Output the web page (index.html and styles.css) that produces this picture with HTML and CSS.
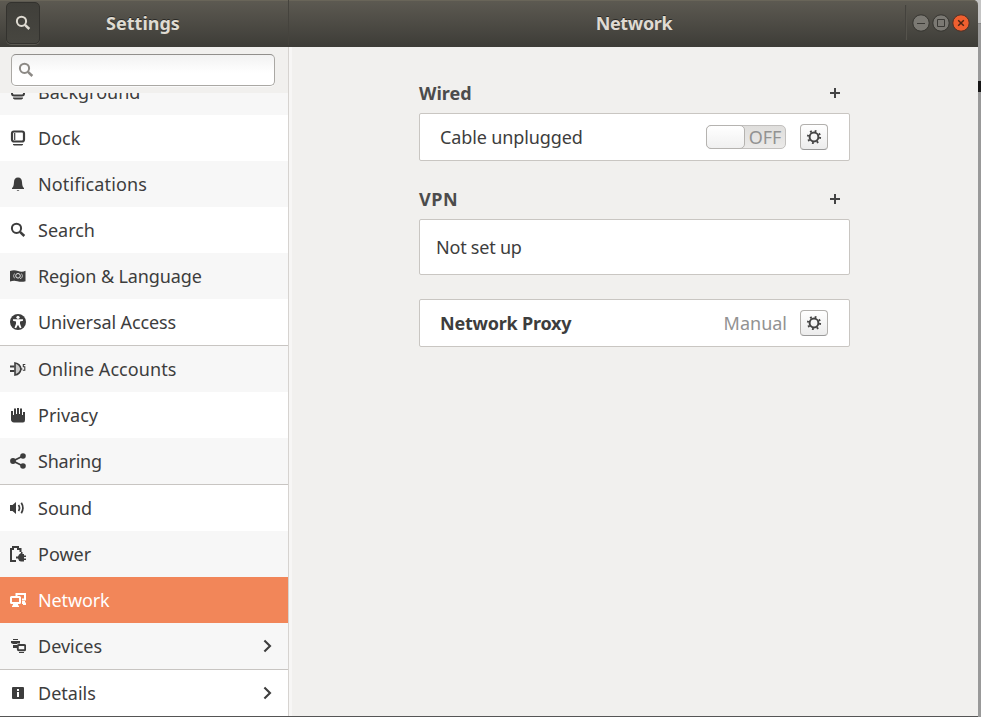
FILE: index.html
```html
<!DOCTYPE html>
<html lang="en">
<head>
<meta charset="utf-8">
<title>Settings</title>
<link rel="stylesheet" href="styles.css">
</head>
<body>
<svg class="defs" width="0" height="0">
  <symbol id="search" viewBox="0 0 16 16"><circle cx="6.500" cy="6.300" r="4.600" fill="none" stroke="currentColor" stroke-width="2"/><path d="M10 9.800 14.300 14" stroke="currentColor" stroke-width="2.500"/></symbol>
  <symbol id="gear" viewBox="0 0 16 16"><g fill="none" stroke="currentColor"><circle cx="8" cy="8" r="4.400" stroke-width="2"/><circle cx="8" cy="8" r="6.100" stroke-width="2" stroke-dasharray="1.800 2.990"/></g></symbol>
  <symbol id="chevron" viewBox="0 0 16 16"><path d="M5.400 2.500 11 8l-5.600 5.500" fill="none" stroke="currentColor" stroke-width="2.100"/></symbol>
</svg>
<div class="desktop">
  <div class="window">
    <header class="titlebar">
      <div class="title-left">
        <button class="search-toggle"><svg width="16" height="16"><use href="#search"/></svg></button>
        <h1 class="title"><span>Settings</span></h1>
      </div>
      <div class="title-right">
        <h1 class="title"><span class="t-network">Network</span></h1>
        <div class="controls">
          <svg class="control" viewBox="0 0 18 18"><circle class="disc" cx="9" cy="9" r="8.200"/><path class="mark" d="M5 9.500h8"/></svg>
          <svg class="control" viewBox="0 0 18 18"><circle class="disc" cx="9" cy="9" r="8.200"/><path class="mark" d="M5.500 5.500h7v7h-7z"/></svg>
          <svg class="control close" viewBox="0 0 18 18"><circle class="disc" cx="9" cy="9" r="8.200"/><path class="mark" d="m6.200 6.200 5.600 5.600m0-5.600-5.600 5.600"/></svg>
        </div>
      </div>
    </header>
    <div class="body">
      <aside class="sidebar">
        <div class="search-bar"><div class="search-field"><svg width="16" height="16"><use href="#search"/></svg></div></div>
        <nav class="list">
          <a class="row alt clipped"><svg viewBox="0 0 16 16"><rect x="2" y="1" width="12" height="10.500" rx="2" fill="none" stroke="currentColor" stroke-width="2"/><path d="M3 13.500h10v1l-1.500 1h-7L3 14.500z" fill="currentColor"/></svg><span>Background</span></a>
          <a class="row"><svg viewBox="0 0 16 16"><rect x="2" y="1.500" width="12" height="10" rx="2" fill="none" stroke="currentColor" stroke-width="2.200"/><path d="M4.700 3v7" stroke="currentColor" stroke-width="1.200"/><path d="M3 14h10v.8l-1 .8H4l-1-.8z" fill="currentColor"/></svg><span>Dock</span></a>
          <a class="row alt"><svg viewBox="0 0 16 16"><path d="M8 1.500C5.300 1.500 4.200 3.200 4 6c-.2 3.500-.7 5-2 6v1h12v-1c-1.300-1-1.800-2.500-2-6-.2-2.800-1.300-4.500-4-4.500zM6.500 14h3L8 15z" fill="currentColor"/></svg><span class="wide">Notifications</span></a>
          <a class="row"><svg viewBox="0 0 16 16"><use href="#search"/></svg><span>Search</span></a>
          <a class="row alt"><svg viewBox="0 0 16 16"><path d="M0 3q4-1.400 8 0t7.500-.2v10.400q-4 1.200-8 0T0 13.600z" fill="currentColor"/><circle cx="8" cy="7.800" r="2.300" fill="none" stroke="#e8e8e8"/><path d="M4.500 5.500q-2 2.300 0 4.800M11.500 5.500q2 2.300 0 4.800M9.500 9.500l1.500 1.500" fill="none" stroke="#bbb"/></svg><span class="tight">Region &amp; Language</span></a>
          <a class="row last"><svg viewBox="0 0 16 16"><circle cx="8" cy="8" r="8" fill="currentColor"/><circle cx="8" cy="3.300" r="1.600" fill="#fff"/><path d="M3 5.200h10v1.500l-3 .8v2.300l1.500 4-1.600.5L8 10.700l-1.900 3.600-1.600-.5L6 9.800V7.500l-3-.8z" fill="#fff"/></svg><span class="tight">Universal Access</span></a>
          <a class="row alt"><svg viewBox="0 0 16 16"><path d="M0 5.500h4.500M0 10h4.500" stroke="currentColor" stroke-width="2"/><path d="M5 2v12q5-.8 6-6-1-5.200-6-6z" fill="#c9c9c9" stroke="currentColor" stroke-width="1.600"/><path d="M11 8h1.500M15.300 3.500h-2v2.300h1.500v3.500h-2" fill="none" stroke="currentColor" stroke-width="1.100"/></svg><span class="slight">Online Accounts</span></a>
          <a class="row"><svg viewBox="0 0 16 16"><path d="M1 4h2v4h1V1.500h2V7h1V1h2v6h1V1.500h2V8h1V5h2v8q0 2.500-2 2.500H4Q1 15 1 12.500z" fill="currentColor"/></svg><span>Privacy</span></a>
          <a class="row alt last"><svg viewBox="0 0 16 16"><path d="M13 3 3 8l10 5" fill="none" stroke="currentColor" stroke-width="1.800"/><g fill="currentColor"><circle cx="13" cy="3" r="2.800"/><circle cx="3" cy="8" r="2.900"/><circle cx="13" cy="13" r="2.800"/></g></svg><span class="tighter">Sharing</span></a>
          <a class="row"><svg viewBox="0 0 16 16"><path d="M0 5h2.500L6 2v12l-3.500-3H0z" fill="currentColor"/><path d="M8.500 5q2 3 0 6M11.300 2.800q3.200 5.200 0 10.400" fill="none" stroke="currentColor" stroke-width="1.700"/></svg><span>Sound</span></a>
          <a class="row alt"><svg viewBox="0 0 16 16"><path d="M6 15H1V3h2V1h5v2h2.500v3" fill="none" stroke="currentColor" stroke-width="2"/><path d="M12.500 6v2H14v1.500h2V11h-2v1.500h2V14h-2v1.500h-3Q8.500 15 8 12.500H6v-2h2Q8.500 8 11 7V6z" fill="currentColor"/></svg><span>Power</span></a>
          <a class="row selected"><svg viewBox="0 0 16 16"><path d="M6.500 4V2H15v5.500h-3" fill="none" stroke="currentColor" stroke-width="2"/><rect x="1" y="5" width="9" height="6" rx=".5" fill="none" stroke="currentColor" stroke-width="2"/><path d="M3 12h5v1.500h1V15H2v-1.500h1zM12 9h3v1.500h1V13h-3v-1h-1z" fill="currentColor"/></svg><span class="tight">Network</span></a>
          <a class="row alt last"><svg viewBox="0 0 16 16"><path d="M3 1h5v1H3zM1 3h9v2.500H7V6H3L1 5zM3 7h4v3H3z" fill="currentColor"/><rect x="7.800" y="7" width="7.400" height="5.200" rx="1" fill="none" stroke="currentColor" stroke-width="1.900"/><path d="M9 14h5v1H9z" fill="currentColor"/></svg><span>Devices</span><svg class="chev"><use href="#chevron"/></svg></a>
          <a class="row"><svg viewBox="0 0 16 16"><rect x="2" y="2" width="12" height="12" rx="1" fill="currentColor"/><path d="M7 4h2v2H7zM7 7h2v5H7z" fill="#fff"/></svg><span>Details</span><svg class="chev"><use href="#chevron"/></svg></a>
        </nav>
      </aside>
      <main class="content">
        <div class="heading"><h2>Wired</h2><svg class="plus" viewBox="0 0 10 10"><path d="M0 5h10M5 0v10"/></svg></div>
        <section class="card"><span class="tight">Cable unplugged</span><div class="switch"><i class="knob"></i><span class="off">OFF</span></div><button class="gear"><svg width="16" height="16"><use href="#gear"/></svg></button></section>
        <div class="heading second"><h2 class="vpn-title">VPN</h2><svg class="plus" viewBox="0 0 10 10"><path d="M0 5h10M5 0v10"/></svg></div>
        <section class="card vpn"><span class="tighter">Not set up</span></section>
        <section class="card proxy"><b class="tighter">Network Proxy</b><span class="manual">Manual</span><button class="gear"><svg width="16" height="16"><use href="#gear"/></svg></button></section>
      </main>
    </div>
  </div>
</div>
</body>
</html>
```
FILE: styles.css
```css
* { box-sizing: border-box; }
body { margin: 0; font: 18px/24px "Noto Sans", sans-serif; color: #3d3d3d; overflow: hidden; }
h1, h2 { margin: 0; font-size: inherit; }
button { padding: 0; }
.wide { letter-spacing: .15px; }
.slight { letter-spacing: .06px; }
.vpn-title { letter-spacing: .5px; }
.tight { letter-spacing: -.12px; }
.tighter { letter-spacing: -.22px; }
.defs { display: none; }
.desktop {
  width: 981px; height: 717px; padding-bottom: 1px;
  background: linear-gradient(#555, #555) 0 716px / 978px 1px no-repeat,
    linear-gradient(#161616, #161616) 978px 81px / 3px 11px no-repeat,
    linear-gradient(#858585, #858585) 978px 23px / 3px 1px no-repeat,
    linear-gradient(#c4c4c4 0, #c4c4c4 23px, #999 24px, #999 100%);
}
.window { width: 978px; height: 716px; display: flex; flex-direction: column; }
.titlebar {
  height: 47px; flex: none; display: flex; border-radius: 0 5px 0 0;
  background: linear-gradient(#5d5a52, #3d3c37); box-shadow: inset 0 1px #696559;
  color: #dfdbd2; text-shadow: 0 -1px #2a2925;
}
.title-left { width: 289px; height: 45px; display: flex; align-items: center; border-right: 1px solid #45433d; }
.title-right { flex: 1; height: 45px; display: flex; align-items: center; padding-right: 8px; }
.title { flex: 1; text-align: center; font-weight: 700; }
.title-left .title { padding-right: 42px; }
.title-right .title { padding-left: 74px; }
.t-network { letter-spacing: -.35px; }
.search-toggle {
  width: 34px; height: 42px; margin-left: 6px; border: 1px solid #33322e; border-radius: 5px;
  background: linear-gradient(#403f3a, #474640); color: #dfdbd2; display: flex; align-items: center; justify-content: center;
  box-shadow: 0 1px #5b5952;
}
.controls { height: 35px; display: flex; align-items: center; gap: 2px; border-left: 1px solid #44423d; padding-left: 6px; box-shadow: inset 1px 0 #55534c; }
.control { width: 18px; height: 18px; }
.disc { fill: #7b7973; stroke: #35342f; }
.mark { fill: none; stroke: #3a3935; }
.close .disc { fill: #ef5f2f; stroke: #4e3025; }
.close .mark { stroke: #4c2412; stroke-width: 1.5; }
.body { flex: 1; min-height: 0; display: flex; background: #f1f0ee; }
.sidebar { width: 289px; height: 669px; border-right: 1px solid #d6d3d0; overflow: hidden; display: flex; flex-direction: column; }
.search-bar { height: 46px; flex: none; padding: 7px 13px 7px 11px; }
.search-field {
  height: 32px; border: 1px solid #aaa8a4; border-top-color: #918f8c; border-radius: 5px; padding: 0 6px;
  background: linear-gradient(#f2f2f2, #fff 60%); display: flex; align-items: center; color: #8c8985; box-shadow: 0 1px #fafafa;
}
.list { flex: 1; min-height: 0; display: flex; flex-direction: column; overflow: hidden; }
.row { height: 46px; flex: none; display: flex; align-items: center; padding: 0 13px 0 10px; background: #fff; white-space: nowrap; }
.row svg { width: 16px; height: 16px; flex: none; margin-right: 12px; }
.row .chev { margin: 0 0 0 auto; }
.alt { background: #f7f7f7; }
.last { height: 47px; border-bottom: 1px solid #c8c5c2; }
.clipped { margin-top: -24px; }
.selected { background: #f28659; color: #fff; }
.content { flex: 1; padding: 26px 128px 0 127px; border-left: 3px solid #f7f6f5; }
.heading { height: 40px; display: flex; align-items: center; justify-content: space-between; padding-right: 10px; color: #4c4c4c; }
.second { margin-top: 18px; }
.plus { width: 10px; height: 10px; }
.plus path { stroke: #444; stroke-width: 2; }
.card { height: 48px; background: #fff; border: 1px solid #c9c6c2; border-radius: 2px; display: flex; align-items: center; padding: 0 21px 0 20px; }
.vpn { height: 56px; padding-left: 16px; }
.proxy { margin-top: 24px; }
.switch { width: 80px; height: 24px; margin-left: auto; border: 1px solid #c2c0be; border-radius: 5px; background: linear-gradient(#dfdedc, #ebeae9); display: flex; align-items: center; color: #929292; }
.knob { width: 39px; height: 24px; margin-left: -1px; flex: none; border: 1px solid #b5b3b0; border-radius: 5px; background: linear-gradient(#fff, #f0f0f0); }
.off { flex: 1; text-align: center; }
.manual { margin-left: auto; color: #929292; }
.gear { width: 28px; height: 26px; border: 1px solid #b2b0ad; border-bottom-color: #999; border-radius: 4px; background: linear-gradient(#fff, #ececec); color: #444; display: flex; align-items: center; justify-content: center; }
.switch + .gear { margin-left: 14px; }
.manual + .gear { margin-left: 13px; }
```
